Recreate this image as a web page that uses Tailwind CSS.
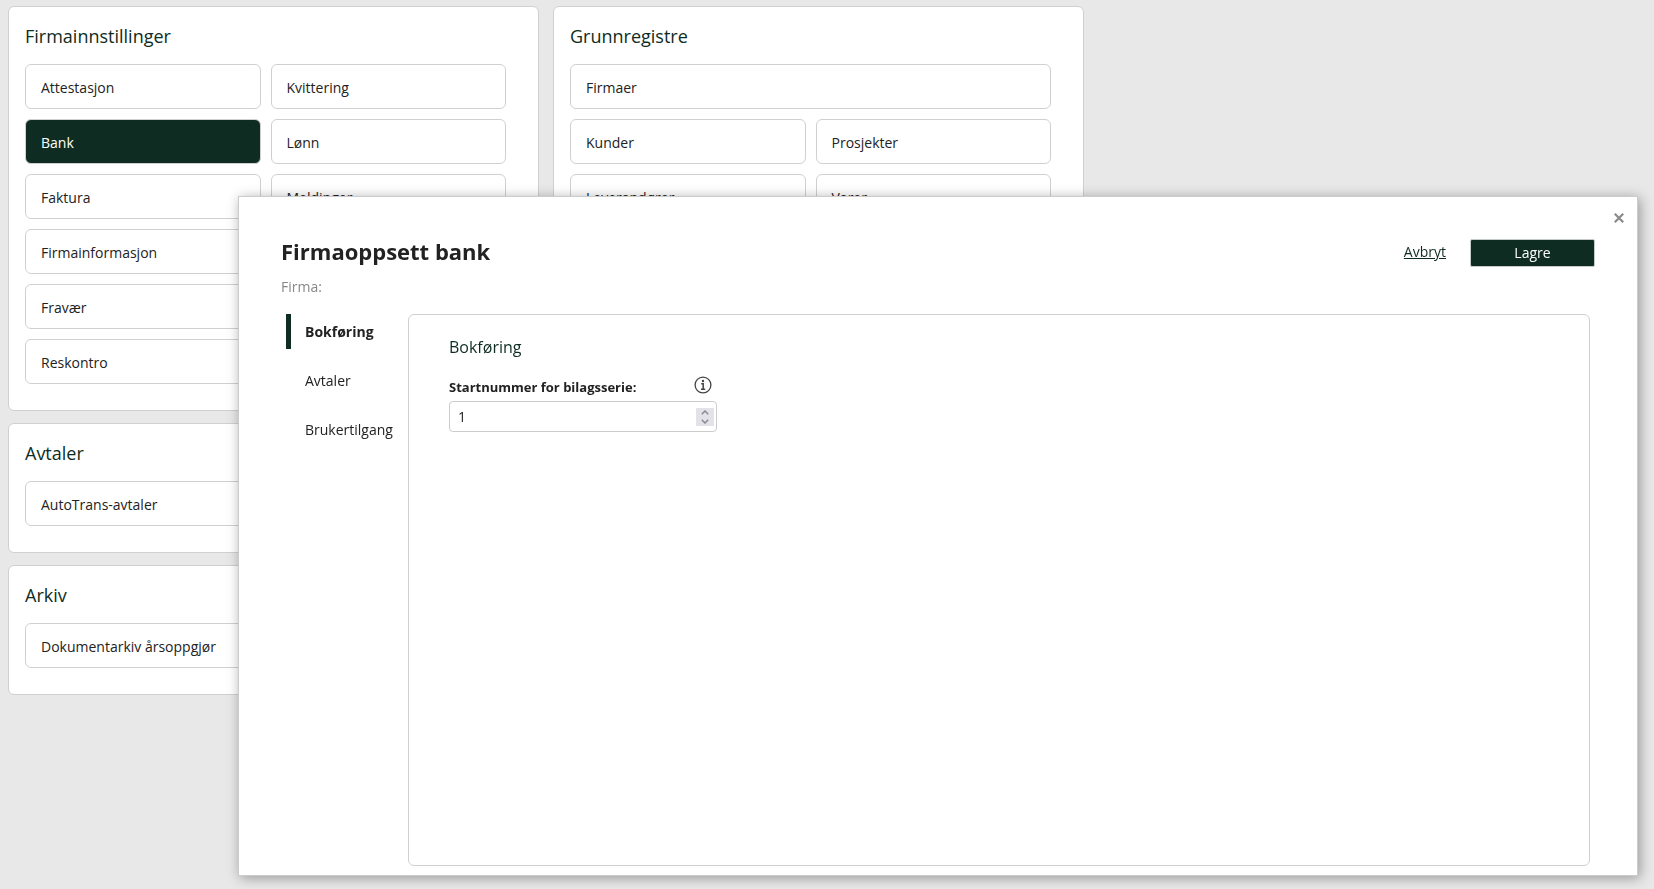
<!DOCTYPE html>
<html lang="no">
<head>
<meta charset="utf-8">
<meta name="viewport" content="width=device-width, initial-scale=1">
<title>Firmaoppsett bank</title>
<script src="https://cdn.jsdelivr.net/npm/@tailwindcss/browser@4"></script>
</head>
<body class="min-h-screen bg-[#e8e8e8] font-['Open_Sans',sans-serif] text-sm text-[#222]">
<main class="flex items-start gap-[14px] px-2 pt-[6px]">
  <div class="flex w-[531px] flex-col gap-3">
    <section class="rounded-md border border-[#d0d0d0] bg-white pr-8 pb-[26px] pl-4">
      <h2 class="pt-4 pb-[15px] text-lg leading-[26px] text-[#0e2c21]">Firmainnstillinger</h2>
      <div class="grid grid-cols-2 gap-[10px]">
        <button class="h-[45px] rounded-md border border-[#d0d0d0] px-[15px] pt-[2px] text-left">Attestasjon</button>
        <button class="h-[45px] rounded-md border border-[#d0d0d0] px-[15px] pt-[2px] text-left">Kvittering</button>
        <button class="h-[45px] rounded-md border border-[#d0d0d0] bg-[#0e2c21] px-[15px] pt-[2px] text-left text-white">Bank</button>
        <button class="h-[45px] rounded-md border border-[#d0d0d0] px-[15px] pt-[2px] text-left">Lønn</button>
        <button class="h-[45px] rounded-md border border-[#d0d0d0] px-[15px] pt-[2px] text-left">Faktura</button>
        <button class="h-[45px] rounded-md border border-[#d0d0d0] px-[15px] pt-[2px] text-left">Meldinger</button>
        <button class="col-start-1 h-[45px] rounded-md border border-[#d0d0d0] px-[15px] pt-[2px] text-left">Firmainformasjon</button>
        <button class="col-start-1 h-[45px] rounded-md border border-[#d0d0d0] px-[15px] pt-[2px] text-left">Fravær</button>
        <button class="col-start-1 h-[45px] rounded-md border border-[#d0d0d0] px-[15px] pt-[2px] text-left">Reskontro</button>
      </div>
    </section>
    <section class="rounded-md border border-[#d0d0d0] bg-white pr-8 pb-[26px] pl-4">
      <h2 class="pt-4 pb-[15px] text-lg leading-[26px] text-[#0e2c21]">Avtaler</h2>
      <div class="grid gap-[10px]">
        <button class="h-[45px] rounded-md border border-[#d0d0d0] px-[15px] pt-[2px] text-left">AutoTrans-avtaler</button>
      </div>
    </section>
    <section class="rounded-md border border-[#d0d0d0] bg-white pr-8 pb-[26px] pl-4">
      <h2 class="pt-4 pb-[15px] text-lg leading-[26px] text-[#0e2c21]">Arkiv</h2>
      <div class="grid gap-[10px]">
        <button class="h-[45px] rounded-md border border-[#d0d0d0] px-[15px] pt-[2px] text-left">Dokumentarkiv årsoppgjør</button>
      </div>
    </section>
  </div>
  <section class="w-[531px] rounded-md border border-[#d0d0d0] bg-white pr-8 pb-[26px] pl-4">
    <h2 class="pt-4 pb-[15px] text-lg leading-[26px] text-[#0e2c21]">Grunnregistre</h2>
    <div class="grid grid-cols-2 gap-[10px]">
      <button class="col-span-2 h-[45px] rounded-md border border-[#d0d0d0] px-[15px] pt-[2px] text-left">Firmaer</button>
      <button class="h-[45px] rounded-md border border-[#d0d0d0] px-[15px] pt-[2px] text-left">Kunder</button>
      <button class="h-[45px] rounded-md border border-[#d0d0d0] px-[15px] pt-[2px] text-left">Prosjekter</button>
      <button class="h-[45px] rounded-md border border-[#d0d0d0] px-[15px] pt-[2px] text-left">Leverandører</button>
      <button class="h-[45px] rounded-md border border-[#d0d0d0] px-[15px] pt-[2px] text-left">Varer</button>
    </div>
  </section>
</main>

<div role="dialog" aria-labelledby="dialog-title" class="fixed top-[196px] right-4 bottom-[13px] left-[238px] flex flex-col border border-[#ccc] bg-white pr-[42px] pb-[9px] pl-[42px] shadow-[2px_2px_12px_rgba(0,0,0,0.35)]">
  <button aria-label="Lukk" class="absolute top-4 right-[13px] text-[#8a8a8a]">
    <svg class="block size-[10px]" viewBox="0 0 10 10" fill="none" stroke="currentColor" stroke-width="2.2"><path d="M.8.8 9.2 9.2M9.2.8.8 9.2"/></svg>
  </button>
  <header class="flex items-start justify-between pt-10">
    <div>
      <h1 id="dialog-title" class="text-[22px] leading-7 font-bold">Firmaoppsett bank</h1>
      <p class="pt-3 leading-5 text-[#888]">Firma:</p>
    </div>
    <div class="flex items-start gap-6 pt-[2px]">
      <a href="#" class="leading-[26px] text-[#0e2c21] underline">Avbryt</a>
      <button class="h-7 w-[125px] rounded-xs border border-[#c4cbc8] bg-[#0e2c21] text-white">Lagre</button>
    </div>
  </header>
  <div class="flex grow pt-[17px] pr-[5px] pl-[5px]">
    <nav class="flex w-[122px] shrink-0 flex-col gap-[14px]">
      <a href="#" class="block border-l-[5px] border-[#0e2c21] pl-[14px] leading-[35px] font-bold">Bokføring</a>
      <a href="#" class="block pl-[19px] leading-[35px]">Avtaler</a>
      <a href="#" class="block pl-[19px] leading-[35px]">Brukertilgang</a>
    </nav>
    <section class="grow rounded-md border border-[#d0d0d0] px-10 pt-5">
      <h2 class="text-base leading-6 text-[#0e2c21]">Bokføring</h2>
      <div class="w-[268px] pt-[15px]">
        <div class="flex items-start justify-between pr-[5px]">
          <label for="startnummer" class="pt-[3px] text-[13px] leading-5 font-bold">Startnummer for bilagsserie:</label>
          <button aria-label="Informasjon" class="pt-[2px] text-[#444]">
            <svg class="block size-[18px]" viewBox="0 0 18 18" fill="none" stroke="currentColor"><circle cx="9" cy="9" r="7.9" stroke-width="1.3"/><circle cx="9" cy="5" r="1.2" fill="currentColor" stroke="none"/><path d="M7.2 7.7H9.2V13M7 13.2H11.2" stroke-width="1.5"/></svg>
          </button>
        </div>
        <div class="relative pt-1">
          <input id="startnummer" type="number" value="1" class="block h-[31px] w-full rounded-sm border border-[#ccc] px-2 [appearance:textfield]">
          <div class="absolute right-[3px] bottom-[6px] flex h-[18px] w-[18px] flex-col bg-[#e3e2e8] text-[#8b8a94]">
            <button aria-label="Øk" class="flex h-[9px] items-center justify-center"><svg class="block h-[5px] w-2" viewBox="0 0 8 5" fill="none" stroke="currentColor" stroke-width="1.5"><path d="M.8 4.2 4 1l3.2 3.2"/></svg></button>
            <button aria-label="Reduser" class="flex h-[9px] items-center justify-center"><svg class="block h-[5px] w-2" viewBox="0 0 8 5" fill="none" stroke="currentColor" stroke-width="1.5"><path d="M.8.8 4 4 7.2.8"/></svg></button>
          </div>
        </div>
      </div>
    </section>
  </div>
</div>
</body>
</html>
